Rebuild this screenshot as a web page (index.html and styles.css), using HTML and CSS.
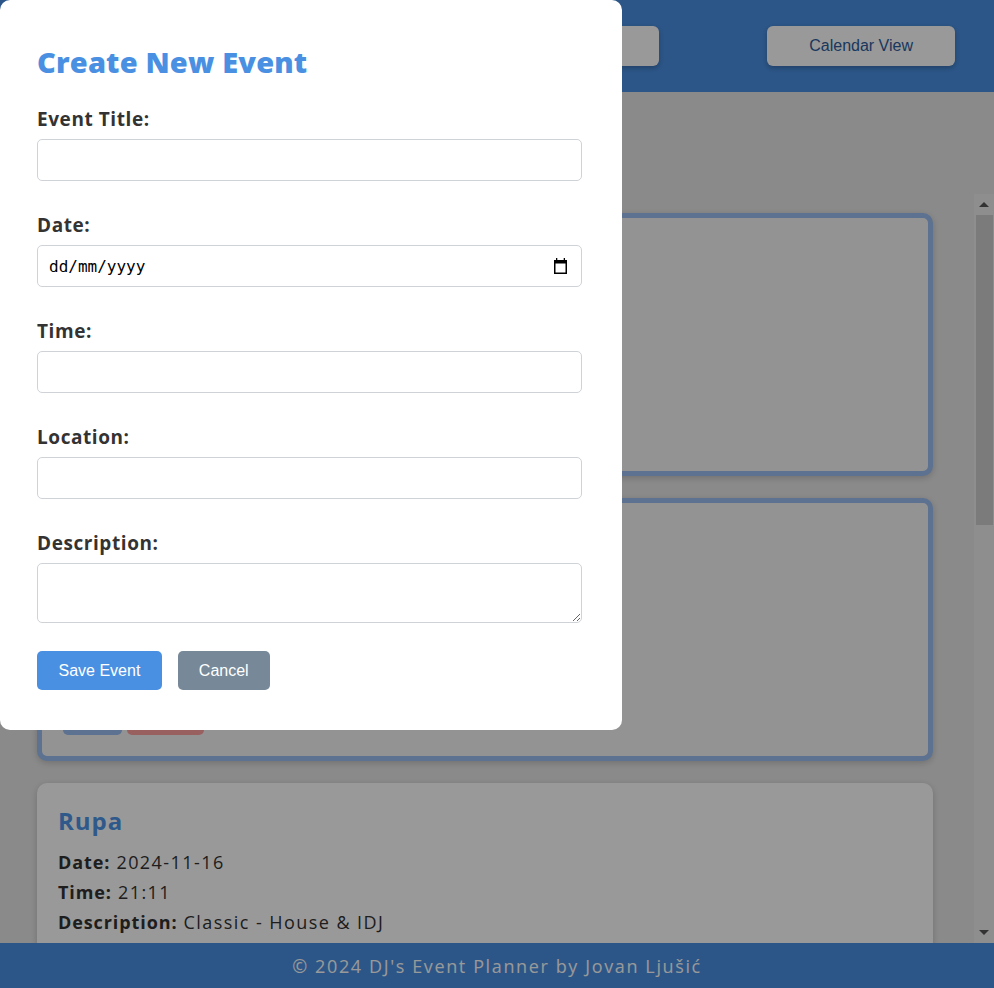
FILE: index.html
```html
<!DOCTYPE html>
<html lang="en-GB">
<head>
<meta charset="utf-8">
<title>DJ's Event Planner</title>
<link rel="stylesheet" href="styles.css">
</head>
<body>
<div class="app">
  <header class="topbar">
    <h1 class="brand">DJ's Event Planner</h1>
    <nav class="nav">
      <button class="nav-btn" type="button">Add New Event</button>
      <button class="nav-btn" type="button">Calendar View</button>
    </nav>
  </header>

  <main class="main">
    <div class="main-head">
      <h2 class="section-title">Upcoming Events</h2>
    </div>
    <div class="list-area">
      <section class="event-list">
        <article class="event-card highlight">
          <h3 class="event-title">Exit Festival</h3>
          <p class="event-line"><strong>Date:</strong> 2024-11-12</p>
          <p class="event-line"><strong>Time:</strong> 22:00</p>
          <p class="event-line"><strong>Description:</strong> Techno night</p>
          <p class="event-line"><strong>Location:</strong> Novi Sad</p>
          <div class="event-actions">
            <button class="card-btn edit" type="button">Edit</button>
            <button class="card-btn delete" type="button">Delete</button>
          </div>
        </article>
        <article class="event-card highlight">
          <h3 class="event-title">Drugstore</h3>
          <p class="event-line"><strong>Date:</strong> 2024-11-14</p>
          <p class="event-line"><strong>Time:</strong> 23:30</p>
          <p class="event-line"><strong>Description:</strong> Deep House</p>
          <p class="event-line"><strong>Location:</strong> Belgrade</p>
          <div class="event-actions">
            <button class="card-btn edit" type="button">Edit</button>
            <button class="card-btn delete" type="button">Delete</button>
          </div>
        </article>
        <article class="event-card">
          <h3 class="event-title">Rupa</h3>
          <p class="event-line"><strong>Date:</strong> 2024-11-16</p>
          <p class="event-line"><strong>Time:</strong> 21:11</p>
          <p class="event-line"><strong>Description:</strong> Classic - House &amp; IDJ</p>
          <p class="event-line"><strong>Location:</strong> Belgrade</p>
          <div class="event-actions">
            <button class="card-btn edit" type="button">Edit</button>
            <button class="card-btn delete" type="button">Delete</button>
          </div>
        </article>
        <article class="event-card">
          <h3 class="event-title">Barutana</h3>
          <p class="event-line"><strong>Date:</strong> 2024-11-22</p>
          <p class="event-line"><strong>Time:</strong> 22:00</p>
          <p class="event-line"><strong>Description:</strong> Open air set</p>
          <p class="event-line"><strong>Location:</strong> Belgrade</p>
          <div class="event-actions">
            <button class="card-btn edit" type="button">Edit</button>
            <button class="card-btn delete" type="button">Delete</button>
          </div>
        </article>
        <article class="event-card">
          <h3 class="event-title">Lasta</h3>
          <p class="event-line"><strong>Date:</strong> 2024-11-30</p>
          <p class="event-line"><strong>Time:</strong> 23:00</p>
          <p class="event-line"><strong>Description:</strong> Tech House</p>
          <p class="event-line"><strong>Location:</strong> Belgrade</p>
          <div class="event-actions">
            <button class="card-btn edit" type="button">Edit</button>
            <button class="card-btn delete" type="button">Delete</button>
          </div>
        </article>
      </section>
      <div class="scrollbar" aria-hidden="true">
        <div class="sb-btn">
          <svg width="10" height="5" viewBox="0 0 10 5"><polygon points="0,5 10,5 5,0" fill="#555"/></svg>
        </div>
        <div class="sb-track"><div class="sb-thumb"></div></div>
        <div class="sb-btn">
          <svg width="10" height="5" viewBox="0 0 10 5"><polygon points="0,0 10,0 5,5" fill="#555"/></svg>
        </div>
      </div>
    </div>
  </main>

  <footer class="footer">© 2024 DJ's Event Planner by Jovan Ljušić</footer>
</div>

<div class="overlay"></div>

<div class="modal">
  <h2 class="modal-title">Create New Event</h2>
  <form class="event-form">
    <div class="form-group">
      <label class="form-label" for="title">Event Title:</label>
      <input class="form-input" id="title" type="text">
    </div>
    <div class="form-group">
      <label class="form-label" for="date">Date:</label>
      <div class="date-field">
        <input class="form-input date-input" id="date" type="text" placeholder="dd/mm/yyyy">
        <svg class="date-icon" width="15" height="16" viewBox="0 0 15 16" aria-hidden="true">
          <rect x="3" y="0" width="1.3" height="3" fill="#000"/>
          <rect x="10.7" y="0" width="1.3" height="3" fill="#000"/>
          <rect x="1" y="2" width="13" height="3.5" fill="#000"/>
          <rect x="1.75" y="2.75" width="11.5" height="12.5" fill="none" stroke="#000" stroke-width="1.5"/>
        </svg>
      </div>
    </div>
    <div class="form-group">
      <label class="form-label" for="time">Time:</label>
      <input class="form-input" id="time" type="text">
    </div>
    <div class="form-group">
      <label class="form-label" for="location">Location:</label>
      <input class="form-input" id="location" type="text">
    </div>
    <div class="form-group last">
      <label class="form-label" for="description">Description:</label>
      <textarea class="form-input form-textarea" id="description"></textarea>
    </div>
    <div class="form-actions">
      <button class="btn btn-save" type="button">Save Event</button>
      <button class="btn btn-cancel" type="button">Cancel</button>
    </div>
  </form>
</div>
</body>
</html>
```

FILE: styles.css
```css
* {
  box-sizing: border-box;
}

html, body {
  margin: 0;
  height: 100%;
}

body {
  font-family: "Open Sans", "Noto Sans", sans-serif;
  letter-spacing: 0.06em;
  color: #333;
  background: #e6e6e6;
  overflow: hidden;
}

.app {
  display: flex;
  flex-direction: column;
  height: 100vh;
}

/* Header */
.topbar {
  flex: 0 0 92px;
  display: flex;
  align-items: center;
  justify-content: space-between;
  padding: 0 39px 0 37px;
  background: #4a90e2;
}

.brand {
  margin: 0;
  font-size: 28px;
  color: #fff;
}

.nav {
  display: flex;
  gap: 108px;
}

.nav-btn {
  font-family: "Liberation Sans", Arial, sans-serif;
  letter-spacing: 0;
  font-size: 16px;
  line-height: 18px;
  padding: 11px 42px;
  border: none;
  border-radius: 6px;
  background: #fff;
  color: #2e5c9c;
  box-shadow: 0 2px 5px rgba(0, 0, 0, 0.25);
}

/* Main */
.main {
  flex: 1 1 auto;
  display: flex;
  flex-direction: column;
  min-height: 0;
}

.main-head {
  flex: 0 0 102px;
  display: flex;
  align-items: center;
  padding: 0 37px;
}

.section-title {
  margin: 0;
  font-size: 26px;
  color: #333;
}

.list-area {
  flex: 1 1 auto;
  min-height: 0;
  display: flex;
}

.event-list {
  flex: 1 1 auto;
  min-width: 0;
  overflow: hidden;
  display: flex;
  flex-direction: column;
  gap: 22px;
  padding: 19px 41px 24px 37px;
}

/* Scrollbar of the event list */
.scrollbar {
  flex: 0 0 20px;
  display: flex;
  flex-direction: column;
  background: #ededed;
}

.sb-btn {
  flex: 0 0 21px;
  display: flex;
  align-items: center;
  justify-content: center;
}

.sb-track {
  flex: 1 1 auto;
  padding: 0 1px 0 2px;
}

.sb-thumb {
  height: 310px;
  background: #cdcdcd;
}

.event-card {
  flex: 0 0 auto;
  background: #fff;
  border-radius: 10px;
  padding: 20px 21px;
  box-shadow: 0 2px 6px rgba(0, 0, 0, 0.18);
}

.event-card.highlight {
  background: #f5f5f5;
  border: 5px solid #99bef0;
  padding: 20px 20px 21px 21px;
}

.event-title {
  margin: 0 0 8px;
  font-size: 24px;
  line-height: 36px;
  font-weight: 700;
  letter-spacing: 0.04em;
  color: #4f95e8;
}

.event-line {
  margin: 0;
  font-size: 18px;
  line-height: 30px;
  letter-spacing: 0.08em;
  color: #333;
}

.event-line strong {
  font-weight: 700;
  letter-spacing: 0.05em;
}

.event-actions {
  display: flex;
  gap: 5px;
  margin-top: 14px;
}

.card-btn {
  font-family: "Liberation Sans", Arial, sans-serif;
  letter-spacing: 0;
  font-size: 16px;
  line-height: 18px;
  padding: 8px 15.5px;
  border: none;
  border-radius: 5px;
  color: #fff;
}

.card-btn.edit {
  background: #99bef0;
}

.card-btn.delete {
  background: #ffa0a0;
}

/* Footer */
.footer {
  flex: 0 0 45px;
  display: flex;
  align-items: center;
  justify-content: center;
  background: #4a90e2;
  color: #fff;
  font-size: 18px;
  letter-spacing: 0.09em;
}

/* Modal */
.overlay {
  position: fixed;
  inset: 0;
  background: rgba(0, 0, 0, 0.4);
}

.modal {
  position: fixed;
  top: 0;
  left: 0;
  width: 622px;
  padding: 44px 40px 40px 37px;
  background: #fff;
  border-radius: 10px;
}

.modal-title {
  margin: 0 0 27px;
  font-size: 29px;
  line-height: 36px;
  font-weight: 800;
  letter-spacing: 0.006em;
  color: #4a90e2;
}

.event-form {
  margin: 0;
}

.form-group {
  margin-bottom: 32px;
}

.form-group.last {
  margin-bottom: 28px;
}

.form-label {
  display: block;
  margin-bottom: 8px;
  font-size: 19px;
  line-height: 24px;
  font-weight: 700;
  letter-spacing: 0.03em;
  color: #333;
}

.form-input {
  display: block;
  width: 100%;
  height: 42px;
  padding: 0 10px;
  border: 1px solid #cfd3d8;
  border-radius: 5px;
  background: #fff;
  font-family: "Open Sans", sans-serif;
  font-size: 16px;
  letter-spacing: 0;
  color: #000;
}

.date-field {
  position: relative;
}

.date-input {
  font-family: "DejaVu Sans Mono", "Liberation Mono", monospace;
  padding-left: 11px;
}

.date-input::placeholder {
  color: #000;
  opacity: 1;
}

.date-icon {
  position: absolute;
  right: 14px;
  top: 13px;
  pointer-events: none;
}

.form-textarea {
  height: 60px;
  padding: 10px;
  resize: both;
}

.form-actions {
  display: flex;
  gap: 16px;
}

.btn {
  font-family: "Liberation Sans", Arial, sans-serif;
  letter-spacing: 0;
  font-size: 16px;
  line-height: 19px;
  padding: 10px 21px;
  border: none;
  border-radius: 5px;
  color: #fff;
}

.btn-save {
  background: #4a90e2;
  padding: 10px 21.5px;
}

.btn-cancel {
  background: #778899;
}
```
